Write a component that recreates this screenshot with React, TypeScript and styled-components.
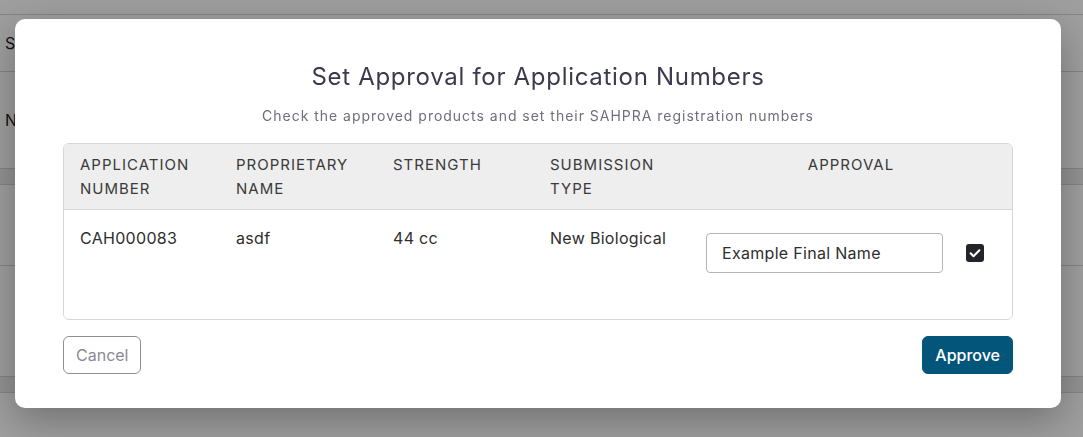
import React from "react";
import styled, { createGlobalStyle } from "styled-components";

const Global = createGlobalStyle`
  html, body { margin: 0; padding: 0; }
  body {
    font-family: Inter, "Noto Sans", "Liberation Sans", sans-serif;
    background: #ffffff;
    overflow: hidden;
  }
  * { box-sizing: border-box; }
`;

const Page = styled.div`
  width: 1083px;
  height: 437px;
  background: #ffffff;
  display: flex;
  flex-direction: column;
`;

const BgRow = styled.div<{ $h: number; $band?: boolean }>`
  height: ${(p) => p.$h}px;
  flex: none;
  border-bottom: 1px solid #d4d4d4;
  background: ${(p) => (p.$band ? "#ececec" : "#ffffff")};
  display: flex;
  align-items: center;
  padding-left: 5px;
  font-size: 16px;
  color: #222;
`;

const Overlay = styled.div`
  position: fixed;
  inset: 0;
  background: rgba(0, 0, 0, 0.38);
  display: flex;
  align-items: flex-start;
  padding: 19px 0 0 15px;
`;

const Modal = styled.div`
  width: 1046px;
  height: 389px;
  background: #ffffff;
  border-radius: 10px;
  box-shadow: 0 12px 40px rgba(0, 0, 0, 0.3);
  padding: 42px 48px 34px;
  display: flex;
  flex-direction: column;
`;

const Title = styled.h2`
  margin: 0;
  text-align: center;
  font-size: 24px;
  line-height: 32px;
  font-weight: 400;
  color: #3b3a4c;
  letter-spacing: 0.7px;
`;

const Subtitle = styled.p`
  margin: 13px 0 0;
  text-align: center;
  font-size: 14px;
  line-height: 20px;
  color: #6e6e7c;
  letter-spacing: 0.98px;
`;

const Table = styled.div`
  margin-top: 17px;
  border: 1px solid #d6d6d6;
  border-radius: 6px;
  overflow: hidden;
`;

const Row = styled.div<{ $head?: boolean }>`
  display: grid;
  grid-template-columns: 156px 157px 157px 156px 1fr;
  background: ${(p) => (p.$head ? "#eeeeee" : "#ffffff")};
  border-bottom: ${(p) => (p.$head ? "1px solid #d6d6d6" : "none")};
  height: ${(p) => (p.$head ? "66px" : "110px")};
`;

const HeadCell = styled.div<{ $center?: boolean }>`
  padding: 9px 16px 8px;
  font-size: 15px;
  line-height: 24px;
  text-transform: uppercase;
  letter-spacing: 1px;
  color: #3a3a3a;
  text-align: ${(p) => (p.$center ? "center" : "left")};
`;

const Cell = styled.div`
  padding: 16px 16px;
  font-size: 16px;
  line-height: 24px;
  color: #2e2e2e;
  letter-spacing: 0.3px;
`;

const ApprovalCell = styled.div`
  padding: 23px 16px 0;
  display: flex;
  align-items: center;
  gap: 23px;
  align-self: start;
`;

const Input = styled.input`
  width: 237px;
  height: 40px;
  border: 1px solid #b5b5b5;
  border-radius: 4px;
  padding: 0 15px;
  font-family: inherit;
  font-size: 16px;
  color: #2e2e2e;
  letter-spacing: 0.3px;
  outline: none;
`;

const Check = styled.span`
  width: 18px;
  height: 18px;
  border-radius: 3px;
  background: #212529;
  display: inline-flex;
  align-items: center;
  justify-content: center;
`;

const Footer = styled.div`
  margin-top: 16px;
  display: flex;
  justify-content: space-between;
`;

const Button = styled.button<{ $primary?: boolean }>`
  height: 38px;
  padding: 0 12px;
  border-radius: 6px;
  font-family: inherit;
  font-size: 16px;
  font-weight: ${(p) => (p.$primary ? 500 : 400)};
  border: 1px solid ${(p) => (p.$primary ? "#03557a" : "#8e8e96")};
  background: ${(p) => (p.$primary ? "#03557a" : "#ffffff")};
  color: ${(p) => (p.$primary ? "#ffffff" : "#8a8a94")};
  cursor: pointer;
`;

export default function App() {
  return (
    <>
      <Global />
      <Page>
        <BgRow $h={15} />
        <BgRow $h={57}>Submissions</BgRow>
        <BgRow $h={97}>New Application</BgRow>
        <BgRow $h={16} $band />
        <BgRow $h={81} />
        <BgRow $h={111} />
        <BgRow $h={16} $band />
        <BgRow $h={45} />
      </Page>
      <Overlay>
        <Modal>
          <Title>Set Approval for Application Numbers</Title>
          <Subtitle>Check the approved products and set their SAHPRA registration numbers</Subtitle>
          <Table>
            <Row $head>
              <HeadCell>Application Number</HeadCell>
              <HeadCell>Proprietary Name</HeadCell>
              <HeadCell>Strength</HeadCell>
              <HeadCell>Submission Type</HeadCell>
              <HeadCell $center>Approval</HeadCell>
            </Row>
            <Row>
              <Cell>CAH000083</Cell>
              <Cell>asdf</Cell>
              <Cell>44 cc</Cell>
              <Cell>New Biological</Cell>
              <ApprovalCell>
                <Input defaultValue="Example Final Name" />
                <Check>
                  <svg width="14" height="14" viewBox="0 0 16 16">
                    <path d="M3 8.3l3.3 3.3L13 4.9" fill="none" stroke="#ffffff" strokeWidth="2.4" strokeLinecap="round" strokeLinejoin="round" />
                  </svg>
                </Check>
              </ApprovalCell>
            </Row>
          </Table>
          <Footer>
            <Button>Cancel</Button>
            <Button $primary>Approve</Button>
          </Footer>
        </Modal>
      </Overlay>
    </>
  );
}
